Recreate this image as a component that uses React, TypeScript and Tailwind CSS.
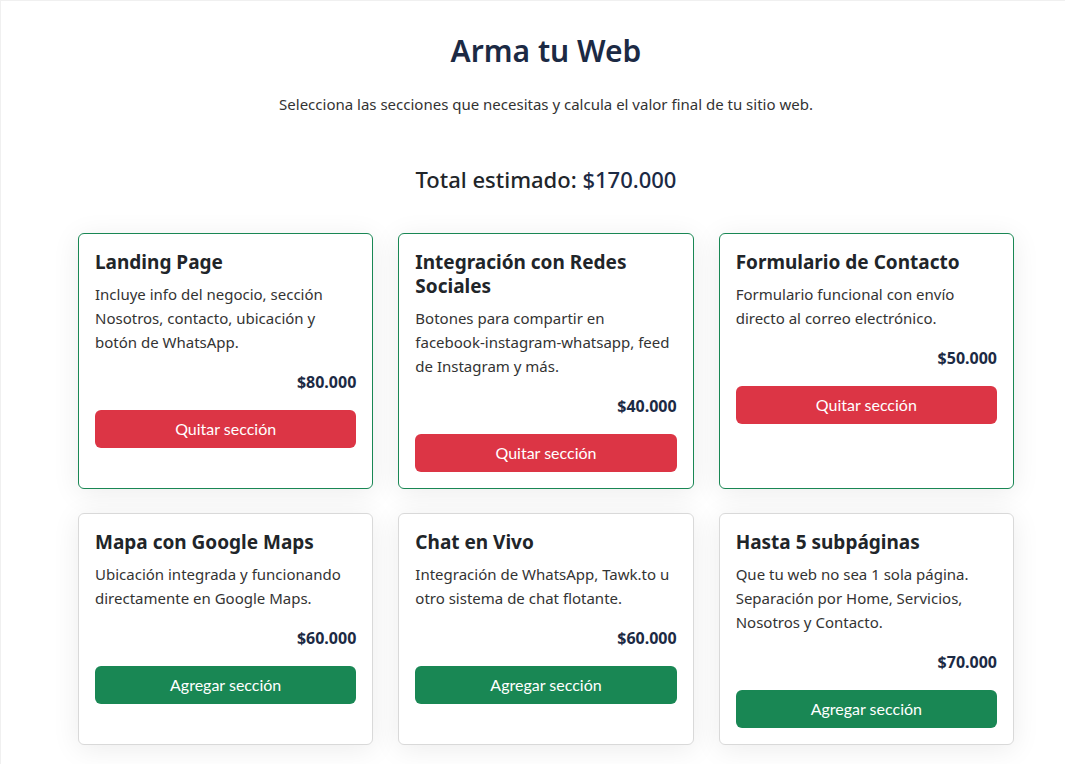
import React, { useState } from "react";

type Item = { id: number; title: string; desc: string; price: number };

const items: Item[] = [
  { id: 1, title: "Landing Page", desc: "Incluye info del negocio, sección Nosotros, contacto, ubicación y botón de WhatsApp.", price: 80000 },
  { id: 2, title: "Integración con Redes Sociales", desc: "Botones para compartir en facebook-instagram-whatsapp, feed de Instagram y más.", price: 40000 },
  { id: 3, title: "Formulario de Contacto", desc: "Formulario funcional con envío directo al correo electrónico.", price: 50000 },
  { id: 4, title: "Mapa con Google Maps", desc: "Ubicación integrada y funcionando directamente en Google Maps.", price: 60000 },
  { id: 5, title: "Chat en Vivo", desc: "Integración de WhatsApp, Tawk.to u otro sistema de chat flotante.", price: 60000 },
  { id: 6, title: "Hasta 5 subpáginas", desc: "Que tu web no sea 1 sola página. Separación por Home, Servicios, Nosotros y Contacto.", price: 70000 },
];

const fmt = (n: number) => "$" + n.toLocaleString("de-DE");

export default function App() {
  const [sel, setSel] = useState<number[]>([1, 2, 3]);
  const total = items.filter((i) => sel.includes(i.id)).reduce((a, b) => a + b.price, 0);
  const toggle = (id: number) =>
    setSel((s) => (s.includes(id) ? s.filter((x) => x !== id) : [...s, id]));

  return (
    <div className="min-h-[764px] bg-white border-t border-l border-[#f0f0f0] font-['Noto_Sans',sans-serif] text-[#212529]">
      <div className="ml-[77px] w-[936px] pt-[31px] flex flex-col items-center">
        <h1 className="text-[30px] leading-[38px] font-semibold text-[#1c2a44]">Arma tu Web</h1>
        <p className="mt-[22px] text-[15px] leading-[24px] text-[#333]">
          Selecciona las secciones que necesitas y calcula el valor final de tu sitio web.
        </p>
        <h2 className="mt-[49px] text-[22px] leading-[28px] font-medium text-[#212529]">
          Total estimado: <span className="text-[#1c2a44]">{fmt(total)}</span>
        </h2>
        <div className="mt-[40px] w-full grid grid-cols-3 gap-x-[25px] gap-y-[24px]">
          {items.map((it) => {
            const on = sel.includes(it.id);
            return (
              <div
                key={it.id}
                className={`rounded-[6px] border bg-white p-4 shadow-[0_4px_28px_rgba(0,0,0,0.08)] ${
                  on ? "border-[#198754]" : "border-[#d9d9d9]"
                }`}
              >
                <h3 className="text-[19px] leading-[24px] font-bold text-[#212529]">{it.title}</h3>
                <p className="mt-[8px] text-[15px] leading-[24px] text-[#333]">{it.desc}</p>
                <div className="mt-[16px] text-right text-[16px] leading-[24px] font-bold text-[#1c2a44]">
                  {fmt(it.price)}
                </div>
                <button
                  onClick={() => toggle(it.id)}
                  className={`mt-[16px] w-full h-[38px] rounded-[6px] text-white text-[16px] font-['Lato',sans-serif] ${
                    on ? "bg-[#dc3545]" : "bg-[#198754]"
                  }`}
                >
                  {on ? "Quitar sección" : "Agregar sección"}
                </button>
              </div>
            );
          })}
        </div>
      </div>
    </div>
  );
}
